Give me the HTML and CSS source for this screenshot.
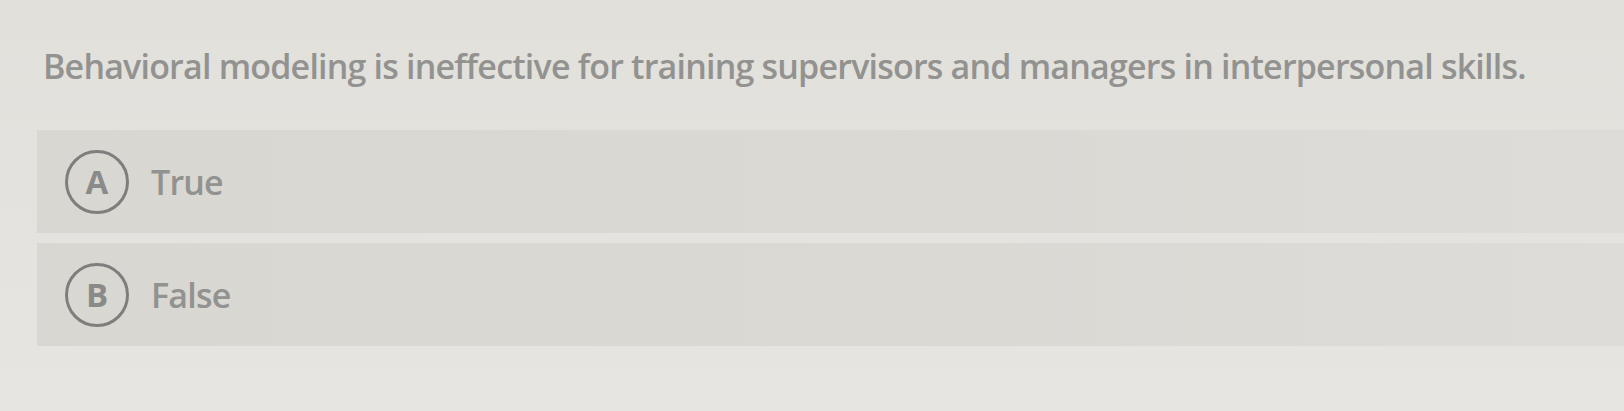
FILE: index.html
```html
<!DOCTYPE html>
<html lang="en">
<head>
    <meta charset="UTF-8">
    <meta name="viewport" content="width=device-width, initial-scale=1.0">
    <title>Question</title>
    <link rel="stylesheet" href="styles.css">
</head>
<body>
    <div class="question">
        <p class="prompt">Behavioral modeling is ineffective for training supervisors and managers in interpersonal skills.</p>
        <div class="choices">
            <label class="choice">
                <span class="letter">A</span>
                <span class="answer">True</span>
            </label>
            <label class="choice">
                <span class="letter">B</span>
                <span class="answer">False</span>
            </label>
        </div>
    </div>
</body>
</html>
```

FILE: styles.css
```css
body {
    font-family: "Open Sans", "Liberation Sans", sans-serif;
    background-color: #e3e2dd;
    background-image: linear-gradient(180deg, #e1e0db 0%, #e6e5e1 100%);
    min-height: 411px;
    color: #929290;
    margin: 0;
    padding: 0;
}

.question {
    padding: 42px 0 0 37px;
}

.prompt {
    margin: 0 0 40px 6px;
    font-size: 34px;
    font-weight: 600;
    line-height: 48px;
    letter-spacing: -0.8px;
}

.choices {
    display: grid;
    grid-gap: 10px;
}

.choice {
    display: flex;
    align-items: center;
    gap: 22px;
    height: 103px;
    padding-left: 28px;
    background-color: #d9d8d3;
    background-image: linear-gradient(90deg, #d8d7d2 0%, #dad9d4 60%, #dddcd8 100%);
}

.letter {
    display: flex;
    align-items: center;
    justify-content: center;
    width: 58px;
    height: 58px;
    border: 3px solid #7e7e7c;
    border-radius: 50%;
    font-size: 33px;
    font-weight: 700;
    color: #8a8a88;
}

.answer {
    font-size: 34px;
    font-weight: 600;
    letter-spacing: -0.8px;
}
```
